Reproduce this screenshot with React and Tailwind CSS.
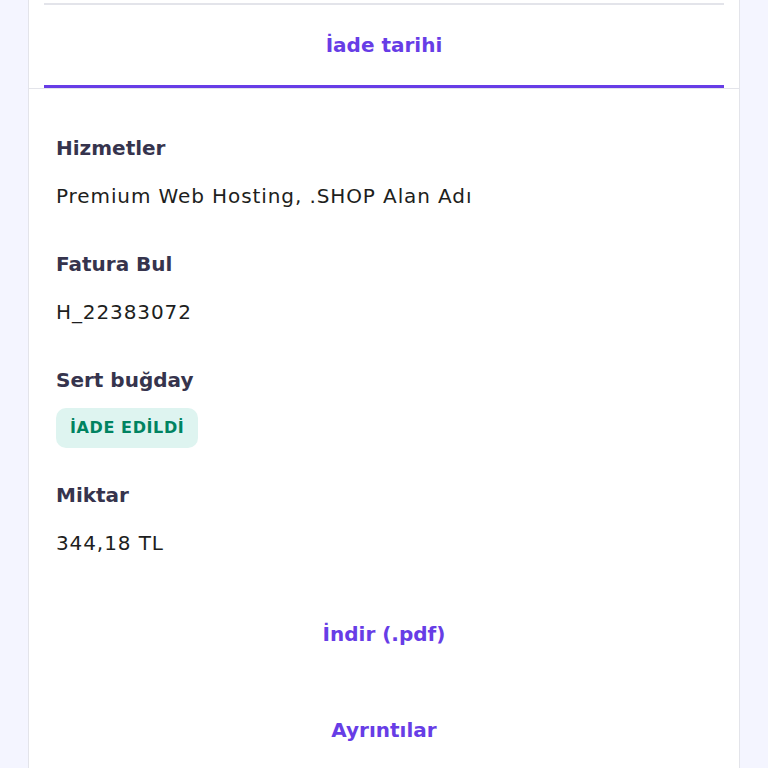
import React from 'react'

const rows = [
  { label: 'Hizmetler', value: 'Premium Web Hosting, .SHOP Alan Adı' },
  { label: 'Fatura Bul', value: 'H_22383072' },
  { label: 'Sert buğday', badge: 'İADE EDİLDİ' },
  { label: 'Miktar', value: '344,18 TL' },
]

const App = () => {
  return (
    <div className="min-h-[768px] bg-[#f4f5ff] px-[28px] font-['DejaVu_Sans',sans-serif]">
      <div className="bg-white border-x border-[#e3e4ea] min-h-[768px]">
        <div className="pt-[3px] px-[15px]">
          <div className="h-[2px] bg-[#e3e4ea]"></div>
          <div className="h-[80px] flex items-center justify-center">
            <span className="text-[20px] font-semibold text-[#673de6]">İade tarihi</span>
          </div>
          <div className="h-[3px] bg-[#673de6]"></div>
        </div>
        <div className="h-px bg-[#e3e4ea]"></div>

        <div className="px-[27px] pt-[45px]">
          {rows.map((r) => (
            <div key={r.label} className={r.badge ? 'mb-[33px]' : 'mb-[40px]'}>
              <div className="text-[20px] leading-[28px] font-bold text-[#36344d]">{r.label}</div>
              {r.badge ? (
                <div className="mt-[14px] inline-flex items-center h-[40px] px-[14px] rounded-[10px] bg-[#def4f0] text-[#008361] text-[16px] font-bold tracking-[0.6px]">
                  {r.badge}
                </div>
              ) : (
                <div className="mt-[20px] text-[20px] leading-[28px] text-[#1d1e20] tracking-[0.9px]">{r.value}</div>
              )}
            </div>
          ))}
        </div>

        <div className="flex flex-col items-center pt-[22px]">
          <button className="h-[28px] text-[20px] font-bold text-[#673de6]">İndir (.pdf)</button>
          <button className="mt-[68px] h-[28px] text-[20px] font-bold text-[#673de6]">Ayrıntılar</button>
        </div>
      </div>
    </div>
  )
}

export default App
